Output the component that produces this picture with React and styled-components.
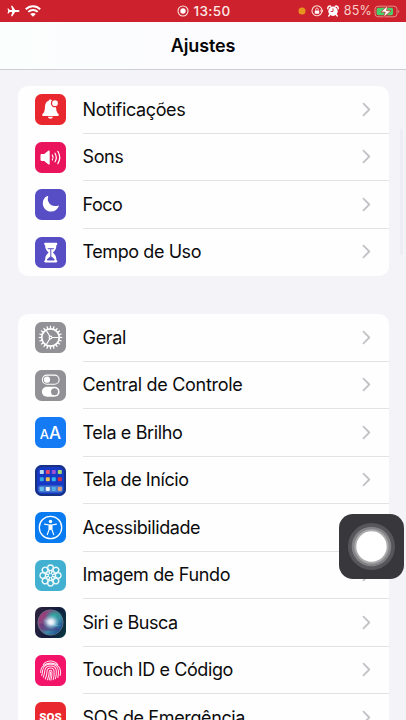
import React from 'react';
import styled, { createGlobalStyle } from 'styled-components';

const GlobalStyle = createGlobalStyle`
  * { box-sizing: border-box; }
  body { margin: 0; background: #f4f3f8; overflow: hidden; }
`;

const Screen = styled.div`
  position: relative;
  width: 406px;
  height: 720px;
  overflow: hidden;
  display: flex;
  flex-direction: column;
  background: #f4f3f8;
  color: #0b0b0d;
  font-family: Inter, "Liberation Sans", sans-serif;
`;

const StatusBar = styled.div`
  flex: none;
  height: 22px;
  display: grid;
  grid-template-columns: 1fr auto 1fr;
  align-items: center;
  padding: 0 6px 0 7px;
  background: #cd222d;
  color: #fbe9e6;
`;

const StatusGroup = styled.div`
  display: flex;
  align-items: center;
  justify-content: ${(p) => p.$align || 'flex-start'};
  gap: ${(p) => p.$gap}px;
  svg { display: block; flex: none; }
`;

const Clock = styled.span`
  font-size: 13.5px;
  line-height: 22px;
  font-weight: 500;
  letter-spacing: 0.35px;
`;

const Percent = styled.span`
  font-size: 12.5px;
  line-height: 22px;
  letter-spacing: 0.2px;
  margin-right: -2.500px;
  color: #f9cfc9;
`;

const NavBar = styled.header`
  flex: none;
  height: 48px;
  display: flex;
  align-items: center;
  justify-content: center;
  border-bottom: 1px solid #cfced2;
  background: linear-gradient(90deg, #fafffd, #fcfbfe 45%, #fcfbfe);
`;

const Title = styled.h1`
  margin: 0;
  font-size: 18px;
  line-height: 24px;
  font-weight: 600;
  letter-spacing: -0.15px;
  color: #050506;
`;

const Content = styled.main`
  padding: 16px 17.5px 0 18px;
  display: flex;
  flex-direction: column;
  gap: 38px;
`;

const Card = styled.section`
  flex: none;
  border-radius: 10px;
  background: #fefefe;
  overflow: hidden;
`;

const RowBox = styled.div`
  height: 47.5px;
  display: flex;
  align-items: center;
  padding-left: 17px;
`;

const IconTile = styled.div`
  flex: none;
  width: 31px;
  height: 31px;
  border-radius: 6.5px;
  overflow: hidden;
  background: ${(p) => p.$bg};
  svg { display: block; }
`;

const RowBody = styled.div`
  flex: 1;
  height: 100%;
  margin-left: 16.5px;
  padding-right: 17.5px;
  display: flex;
  align-items: center;
  justify-content: space-between;
  border-bottom: 1px solid ${(p) => (p.$last ? 'transparent' : '#e3e2e6')};
`;

const Label = styled.span`
  font-size: 18px;
  line-height: 24px;
  padding-top: 1px;
  letter-spacing: ${(p) => p.$spacing}px;
  white-space: nowrap;
`;

const AssistiveButton = styled.button`
  position: absolute;
  left: 339px;
  top: 514px;
  width: 65px;
  height: 65px;
  padding: 0;
  border: 0;
  border-radius: 14px;
  background: #38373b;
  svg { display: block; }
`;

const ScrollThumb = styled.div`
  position: absolute;
  left: 400px;
  top: 129px;
  width: 3px;
  height: 126px;
  border-radius: 2px;
  background: #efedf4;
`;

const Icon = ({ children }) => (
  <svg width="31" height="31" viewBox="0 0 31 31" fill="none">{children}</svg>
);

const BellIcon = () => (
  <Icon>
    <path d="M15.3 5.4c-1 0-1.5.6-1.6 1.4-2.5.8-3.5 2.8-3.7 5.6-.2 4.1-.7 5.8-2.4 7.6-.9 1-.5 2 .8 2h14.2c1.3 0 1.7-1 .8-2-1.7-1.8-2.2-3.5-2.4-7.6-.2-2.8-1.3-4.8-3.9-5.6-.2-.8-.8-1.4-1.8-1.4z" fill="#fff" />
    <path d="M12.9 22.8h5c-.3 1.3-1.2 2-2.5 2s-2.2-.7-2.5-2z" fill="#fff" />
    <circle cx="20" cy="9.2" r="3.5" fill="#fff" stroke="#e9272e" strokeWidth="1.3" />
  </Icon>
);

const SpeakerIcon = () => (
  <Icon>
    <path d="M5.5 13.2c0-.7.4-1.1 1.1-1.1h2.6l4-3.400c.7-.6 1.500-.3 1.500.6v12.400c0 .9-.8 1.200-1.500.6l-4-3.400H6.600c-.7 0-1.100-.4-1.100-1.100z" fill="#fff" />
    <path d="M17.400 13.100q1.400 2.400 0 4.800M20 11.200q2.600 4.300 0 8.600M22.800 9.300q3.900 6.200 0 12.400" stroke="#fff" strokeWidth="1.200" strokeLinecap="round" />
  </Icon>
);

const MoonIcon = () => (
  <Icon>
    <path d="M12.400 7.100c.6-.25 1 .15.800.8-.5 1.400-.5 3.100.1 4.600 1.400 3.700 5.600 5.500 9.500 4.200.8-.3 1.200.1.900.8-1.300 3-4.200 5-7.500 5-4.700 0-8.400-3.600-8.400-8.300 0-3.200 1.800-6 4.600-7.100z" fill="#fff" />
  </Icon>
);

const HourglassIcon = () => (
  <Icon>
    <path d="M10.400 5.800h10.700c.8 0 1.200.4 1.200 1.100s-.4 1-.9 1.100c0 3.800-1.100 5.300-3.500 7.600 2.400 2.200 3.500 3.800 3.500 7.600.5.100.9.400.9 1.100s-.4 1.100-1.200 1.100H10.400c-.8 0-1.200-.4-1.200-1.100s.4-1 .9-1.100c0-3.800 1.100-5.400 3.500-7.600-2.400-2.300-3.500-3.800-3.500-7.600-.5-.1-.9-.4-.9-1.100s.4-1.100 1.200-1.100z" fill="#fff" />
    <path d="M12.700 11.700h6.200M15.800 12v8.200M12.400 23c.2-1.500 1.500-2 3.400-3.100 1.900 1.100 3.200 1.600 3.400 3.100z" stroke="#574dc5" strokeWidth="1" fill="#574dc5" />
  </Icon>
);

const teeth = Array.from({ length: 20 }, (_, i) => i * 18);
const GearIcon = () => (
  <Icon>
    {teeth.map((a) => (
      <path key={a} d="M14.650 6.500l.35-2.800h1l.35 2.800z" fill="#fff" transform={`rotate(${a} 15.500 15.500)`} />
    ))}
    <circle cx="15.500" cy="15.500" r="8.700" stroke="#fff" strokeWidth="1.700" />
    <path d="M15.500 15.500h8M15.500 15.500l-4.300-7.200M15.500 15.500l-4.300 7.200" stroke="#fff" strokeWidth="1.200" />
    <circle cx="15.500" cy="15.500" r="1.900" fill="#fff" />
    <circle cx="15.500" cy="15.500" r=".8" fill="#929196" />
  </Icon>
);

const TogglesIcon = () => (
  <Icon>
    <rect x="7.400" y="5.100" width="16.700" height="9.100" rx="4.550" stroke="#fff" strokeWidth="1.100" />
    <circle cx="12" cy="9.650" r="3.100" fill="#fff" />
    <rect x="6.900" y="16.700" width="17.700" height="10" rx="5" fill="#fff" />
    <circle cx="19.500" cy="21.700" r="3.500" fill="#929196" />
  </Icon>
);

const LetterPair = styled.div`
  width: 31px;
  height: 31px;
  display: flex;
  justify-content: center;
  align-items: baseline;
  font-size: 17px;
  line-height: 32px;
  font-weight: 500;
  color: #fff;
  small { font-size: 13px; }
`;

const APP_ROWS = [
  ['#b9dff0', '#e44d6f', '#9b51d6', '#a9dc69'],
  ['#31a9e4', '#f0c253', '#35b6ec', '#d62c45'],
  ['#65bfea', '#f4f3ee', '#55aee5', '#e59a76'],
];
const HomeIcon = () => (
  <Icon>
    <rect x="1" y="1" width="29" height="29" rx="6" stroke="#173280" strokeWidth="2" />
    <rect x="3.300" y="20.500" width="24.500" height="7" rx="2" fill="#4377d0" />
    {APP_ROWS.map((row, y) => row.map((color, x) => (
      <rect key={`${x}${y}`} x={4.8 + x * 6} y={[5, 12.2, 21.9][y]} width="4" height="4" rx=".8" fill={color} />
    )))}
  </Icon>
);

const AccessIcon = () => (
  <Icon>
    <circle cx="15.500" cy="15.500" r="11.200" stroke="#fff" strokeWidth="1.300" />
    <circle cx="15.500" cy="9.500" r="1.750" fill="#fff" />
    <path d="M9.600 12.200l4.400.8h3l4.400-.8M14.200 13.400v3.800L12.300 22.600M16.800 13.400v3.800l1.900 5.400" stroke="#fff" strokeWidth="1.200" strokeLinecap="round" strokeLinejoin="round" />
    <path d="M13.800 12.700h3.400v4.300l-1 1h-1.400l-1-1z" fill="#fff" />
  </Icon>
);

const petals = [0, 45, 90, 135, 180, 225, 270, 315];
const FlowerIcon = () => (
  <Icon>
    {petals.map((a) => (
      <g key={a} transform={`rotate(${a} 15.500 15.500)`}>
        <circle cx="15.500" cy="7.800" r="2.800" stroke="#eefaf9" strokeWidth="1.300" />
        <circle cx="15.500" cy="12" r="1.500" stroke="#eefaf9" strokeWidth="1" />
      </g>
    ))}
  </Icon>
);

const SiriIcon = () => (
  <Icon>
    <defs>
      <linearGradient id="orb" x1="4" y1="5" x2="27" y2="25" gradientUnits="userSpaceOnUse">
        <stop stopColor="#b52f77" /><stop offset=".4" stopColor="#725385" /><stop offset=".65" stopColor="#398ba8" /><stop offset="1" stopColor="#163a8a" />
      </linearGradient>
      <radialGradient id="glow">
        <stop stopColor="#fff" /><stop offset=".35" stopColor="#e9f6ff" stopOpacity=".85" /><stop offset="1" stopColor="#7bc9e4" stopOpacity="0" />
      </radialGradient>
      <radialGradient id="teal">
        <stop stopColor="#25b2a1" /><stop offset="1" stopColor="#25b2a1" stopOpacity="0" />
      </radialGradient>
    </defs>
    <circle cx="15.500" cy="15.500" r="12.700" fill="url(#orb)" stroke="#65717d" strokeWidth=".8" />
    <ellipse cx="19" cy="8.500" rx="9" ry="6" fill="url(#teal)" />
    <path d="M4 17Q13 14 25 23Q14 25 7 23z" fill="#5c2877" opacity=".4" />
    <path d="M8 12Q14 14 17 16T27 19Q18 20 8 12z" fill="#b7d7f2" opacity=".4" />
    <ellipse cx="16" cy="15" rx="8.500" ry="7.500" fill="url(#glow)" />
  </Icon>
);

const FingerprintIcon = () => (
  <Icon>
    <g stroke="#ffe2ec" strokeWidth="1.050" strokeLinecap="round">
      <path d="M8.300 9.500C12 4.800 19 4.800 22.700 9.500M5.700 17.500C5.300 5.500 25.500 4.500 25.600 17.500L25.200 20.500" />
      <path d="M6.700 20.500c.7-2 .7-3 .9-5C8.400 7 22.500 7 23.400 15.500c.2 2.500 0 5-.6 7" />
      <path d="M8.300 22.300c1.100-2.400 1.300-4.300 1.500-6.500.6-6.500 11-6.500 11.500 0 .2 3-.2 5.500-.9 8" />
      <path d="M10.300 24c1.200-2.800 1.500-5 1.700-7.600.3-4.500 6.800-4.500 7.100 0 .2 3-.2 6-.9 8.300" />
      <path d="M12.500 24.800c1.200-3 1.500-5.300 1.700-8.100.1-1.900 2.600-1.900 2.700 0 .2 3.300-.2 6.200-1 8.500M15.500 17c.1 3-.4 5.400-1.200 7.800" />
    </g>
  </Icon>
);

const SosText = styled.div`
  width: 31px;
  text-align: center;
  font-family: Roboto, sans-serif;
  font-size: 11.5px;
  font-weight: 900;
  line-height: 30px;
  color: #fff;
`;

const GROUPS = [
  [
    { label: 'Notificações', bg: '#e9272e', icon: <BellIcon />, spacing: -0.37 },
    { label: 'Sons', bg: '#e9145c', icon: <SpeakerIcon />, spacing: -0.4 },
    { label: 'Foco', bg: '#574dc5', icon: <MoonIcon />, spacing: -0.5 },
    { label: 'Tempo de Uso', bg: '#574dc5', icon: <HourglassIcon />, spacing: -0.42 },
  ],
  [
    { label: 'Geral', bg: '#929196', icon: <GearIcon />, spacing: -0.3 },
    { label: 'Central de Controle', bg: '#929196', icon: <TogglesIcon />, spacing: -0.3 },
    { label: 'Tela e Brilho', bg: '#147bf5', icon: <LetterPair><small>A</small>A</LetterPair>, spacing: -0.38 },
    { label: 'Tela de Início', bg: '#1638c4', icon: <HomeIcon />, spacing: -0.43 },
    { label: 'Acessibilidade', bg: '#087bf0', icon: <AccessIcon />, spacing: -0.4 },
    { label: 'Imagem de Fundo', bg: '#42b0d0', icon: <FlowerIcon />, spacing: -0.34 },
    { label: 'Siri e Busca', bg: 'linear-gradient(110deg, #30243f, #101c3d 60%, #093c43)', icon: <SiriIcon />, spacing: -0.43 },
    { label: 'Touch ID e Código', bg: '#f3146a', icon: <FingerprintIcon />, spacing: -0.4 },
    { label: 'SOS de Emergência', bg: '#e9272e', icon: <SosText>SOS</SosText>, spacing: -0.38 },
  ],
];

const Chevron = () => (
  <svg width="9" height="15" viewBox="0 0 9 15" fill="none">
    <path d="M1.500 1.700L7.300 7.500 1.500 13.300" stroke="#c3c2c7" strokeWidth="1.800" strokeLinecap="round" strokeLinejoin="round" />
  </svg>
);

const Row = ({ item, last }) => (
  <RowBox>
    <IconTile $bg={item.bg}>{item.icon}</IconTile>
    <RowBody $last={last}>
      <Label $spacing={item.spacing}>{item.label}</Label>
      <Chevron />
    </RowBody>
  </RowBox>
);

export default function App() {
  return (
    <Screen>
      <GlobalStyle />
      <StatusBar>
        <StatusGroup $gap={5}>
          <svg width="13" height="12" viewBox="0 0 13 12">
            <path d="M12.500 6c0-.6-.6-.9-1.400-.9H8.200L5.300.8H4l1.300 4.300H2.700L1.500 3.500H.5L1.200 6 .5 8.500h1l1.200-1.600h2.600L4 11.200h1.300l2.900-4.300h2.900c.8 0 1.400-.3 1.400-.9z" fill="#fff" />
          </svg>
          <svg width="16" height="12" viewBox="0 0 16 12" fill="none" stroke="#fff" strokeWidth="2">
            <path d="M.8 4.300C4.800.2 11.200.2 15.200 4.300M3.300 6.900c2.700-2.600 6.700-2.600 9.400 0" />
            <path d="M5.200 9c1.700-1.500 3.900-1.500 5.600 0L8 11.700z" fill="#fff" stroke="none" />
          </svg>
        </StatusGroup>
        <StatusGroup $gap={5}>
          <svg width="12" height="12" viewBox="0 0 12 12" fill="none">
            <circle cx="6" cy="6" r="5" stroke="#fbe3df" strokeWidth="1.100" />
            <circle cx="6" cy="6" r="2.700" fill="#fff" />
          </svg>
          <Clock>13:50</Clock>
        </StatusGroup>
        <StatusGroup $gap={4.5} $align="flex-end">
          <svg width="8" height="8" viewBox="0 0 8 8"><circle cx="4" cy="4" r="3.500" fill="#e6941e" /></svg>
          <svg width="12" height="12" viewBox="0 0 12 12" fill="none" stroke="#fbdcd7">
            <path d="M10.800 7.200A5 5 0 1 1 11 5.600M9.300 5.300l1.700 1.500 1-2" strokeWidth="1.100" />
            <rect x="3.800" y="5.400" width="4.400" height="3.300" rx=".5" fill="#fff" stroke="none" />
            <path d="M4.700 5.500V4.300c0-1.700 2.600-1.700 2.600 0v1.200" strokeWidth=".9" />
          </svg>
          <svg width="12" height="12" viewBox="0 0 12 12" fill="none">
            <circle cx="6" cy="6.300" r="4.700" fill="#fff" />
            <path d="M.8 3.700C.5 2 2 .7 3.600 1.200M11.200 3.700C11.500 2 10 .7 8.400 1.200M2.700 9.700l-1 1.300M9.300 9.700l1 1.300" stroke="#fff" strokeWidth="1.400" strokeLinecap="round" />
            <path d="M6 3.300v3.200H3.700" stroke="#cd222d" strokeWidth=".9" />
          </svg>
          <Percent>85%</Percent>
          <svg width="26" height="13" viewBox="0 0 26 13" fill="none">
            <rect x="1" y="1.200" width="22" height="10.600" rx="3" stroke="#e58c87" />
            <rect x="2.600" y="2.800" width="16.500" height="7.400" rx="1.600" fill="#48cf69" />
            <path d="M24.300 4.800c1.400.7 1.400 2.700 0 3.400z" fill="#e58c87" />
            <path d="M13.700.6L7 7.100h4.300L9.400 12.500 17 5.700h-4.500z" fill="#fff" stroke="#cd222d" strokeWidth=".7" />
          </svg>
        </StatusGroup>
      </StatusBar>
      <NavBar><Title>Ajustes</Title></NavBar>
      <Content>
        {GROUPS.map((rows, g) => (
          <Card key={g}>
            {rows.map((item, i) => <Row key={item.label} item={item} last={i === rows.length - 1} />)}
          </Card>
        ))}
      </Content>
      <ScrollThumb />
      <AssistiveButton aria-label="AssistiveTouch">
        <svg width="65" height="65" viewBox="0 0 65 65">
          <circle cx="32.500" cy="32.500" r="23.500" fill="#57565a" />
          <circle cx="32.500" cy="32.500" r="19.800" fill="#848386" />
          <circle cx="32.500" cy="32.500" r="17.200" fill="#aaa9ac" />
          <circle cx="32.500" cy="32.500" r="15.200" fill="#fff" />
        </svg>
      </AssistiveButton>
    </Screen>
  );
}
